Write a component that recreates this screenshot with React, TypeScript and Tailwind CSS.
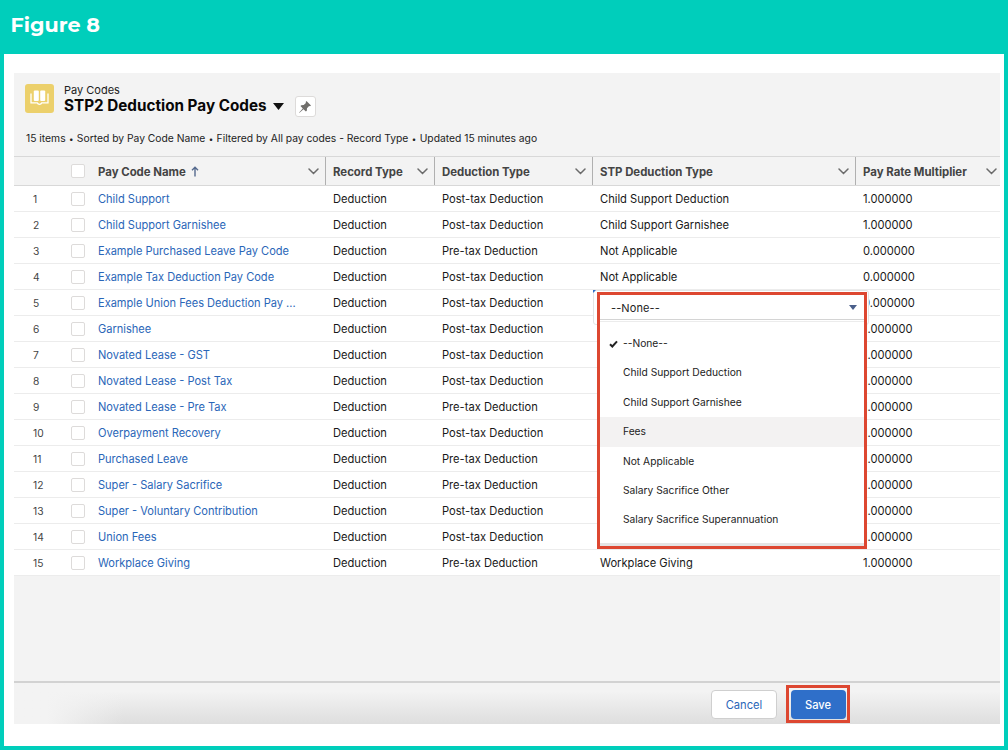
import * as React from 'react';

const ROWS = [
  ['Child Support', 'Post-tax', 'Child Support Deduction', '1.000000'],
  ['Child Support Garnishee', 'Post-tax', 'Child Support Garnishee', '1.000000'],
  ['Example Purchased Leave Pay Code', 'Pre-tax', 'Not Applicable', '0.000000'],
  ['Example Tax Deduction Pay Code', 'Post-tax', 'Not Applicable', '0.000000'],
  ['Example Union Fees Deduction Pay ...', 'Post-tax', '', '0.000000'],
  ['Garnishee', 'Post-tax', '', '1.000000'],
  ['Novated Lease - GST', 'Post-tax', '', '1.000000'],
  ['Novated Lease - Post Tax', 'Post-tax', '', '1.000000'],
  ['Novated Lease - Pre Tax', 'Pre-tax', '', '1.000000'],
  ['Overpayment Recovery', 'Post-tax', '', '1.000000'],
  ['Purchased Leave', 'Pre-tax', '', '1.000000'],
  ['Super - Salary Sacrifice', 'Pre-tax', '', '1.000000'],
  ['Super - Voluntary Contribution', 'Post-tax', '', '1.000000'],
  ['Union Fees', 'Post-tax', '', '1.000000'],
  ['Workplace Giving', 'Pre-tax', 'Workplace Giving', '1.000000'],
];

const OPTIONS = ['--None--', 'Child Support Deduction', 'Child Support Garnishee', 'Fees', 'Not Applicable', 'Salary Sacrifice Other', 'Salary Sacrifice Superannuation'];

const gridClass = 'grid grid-cols-[50px_27px_235px_109px_158px_263px_144px]';
const headClass = 'flex items-center justify-between border-[#b0b0b0] pl-[7px] whitespace-nowrap';
const cellClass = 'pl-[7px] pt-0.5';
const boxClass = 'h-3.5 w-3.5 rounded-[2px] border border-[#dddbda] bg-white';

function HeadCell({ label, sorted, last }: { label: string; sorted?: boolean; last?: boolean }) {
  return (
    <div className={`${headClass} ${last ? 'pr-[3px]' : 'border-r pr-1.5'}`}>
      <span className="flex items-center pt-[3px]">
        {label}
        {sorted && (
          <svg className="ml-[5px] h-[11px] w-2 -translate-y-px" viewBox="0 0 8 11" fill="none" stroke="#54698d" strokeWidth="1.4">
            <path d="M4 10.5V1.2M1 4.2l3-3 3 3" />
          </svg>
        )}
      </span>
      <svg className="mt-px h-[7px] w-[11px]" viewBox="0 0 11 7" fill="none" stroke="#6b6b6b" strokeWidth="1.5" strokeLinecap="round">
        <path d="M1 1l4.5 4.5L10 1" />
      </svg>
    </div>
  );
}

function Picklist() {
  return (
    <>
      {/* Inline edit cell behind the menu */}
      <div className="absolute left-[579px] top-[217px] h-[35px] w-[276px] rounded-[3px] border border-[#e4e4e4] bg-white">
        <svg className="absolute -left-px -top-px h-[3px] w-[3px]" viewBox="0 0 3 3"><path d="M0 0h3L0 3z" fill="#2f6fc9" /></svg>
      </div>
      <div className="absolute left-[583px] top-[219px] h-[257px] w-[270px] border-[3px] border-[#dd4731] bg-white text-[#222]">
        <div className="flex h-[25px] items-center justify-between border-b border-[#d4d4d4] pl-[11px] pr-[7px] pt-[3px] text-[11px] tracking-[0.1px]">
          <span>--None--</span>
          <svg className="mb-0.5 h-[5px] w-2" viewBox="0 0 8 5"><path d="M0 0h8L4 5z" fill="#4a5f8a" /></svg>
        </div>
        <div className="mt-px border-t border-[#ececec] pt-[7px] text-[10.25px]">
          {OPTIONS.map((o, i) => (
            <div key={o} className={`flex h-[29.4px] items-center pl-[9px] ${i === 3 ? 'bg-[#f3f2f2]' : ''}`}>
              <span className="flex w-3.5 items-center">
                {i === 0 && <svg className="h-2 w-[9px]" viewBox="0 0 9 8"><path d="M1 4.3l2.3 2.2L8 1.4" fill="none" stroke="#222" strokeWidth="2" /></svg>}
              </span>
              <span>{o}</span>
            </div>
          ))}
        </div>
        <div className="absolute inset-x-0 bottom-0 h-[3px] bg-[#e4e4e4]" />
      </div>
    </>
  );
}

function Dot() {
  return <span className="mx-[0.5px] text-[8px]">•</span>;
}

export default function App() {
  return (
    <div className="flex h-[750px] w-[1008px] flex-col overflow-hidden bg-[#00cebb] px-1 pb-1 font-[Inter,sans-serif]">
      <header className="flex h-[54px] shrink-0 items-center pb-[5px] pl-[6.5px]">
        <h1 className="font-[Montserrat,Inter,sans-serif] text-[20.7px] font-bold text-white">Figure 8</h1>
      </header>

      <main className="flex-1 bg-white pl-2.5 pr-1 pt-[19px]">
        <div className="relative flex h-[651px] flex-col bg-[#f3f3f3]">
          {/* List view header */}
          <div className="h-[83px] shrink-0 pl-3 pt-[11px]">
            <div className="-ml-px flex">
              <div className="flex h-[29px] w-[29px] items-center justify-center rounded-[3px] bg-[#ecd06b]">
                <svg className="mb-0.5 h-[17px] w-[19px]" viewBox="0 0 19 17" fill="#fff">
                  <rect x="3.8" y="1.5" width="5" height="10.5" rx="1" />
                  <rect x="10.2" y="1.5" width="5" height="10.5" rx="1" />
                  <path d="M1 4.5v9.3h6.2q.6 1.5 2.3 1.5t2.3-1.5H18V4.5" fill="none" stroke="#fff" strokeWidth="1.3" />
                </svg>
              </div>
              <div className="ml-2.5">
                <p className="text-[11px] leading-[13px] text-[#222]">Pay Codes</p>
                <div className="flex h-[17px] items-center">
                  <h2 className="whitespace-nowrap text-[15.25px] font-bold leading-4 text-[#080707]">STP2 Deduction Pay Codes</h2>
                  <svg className="ml-1.5 mt-0.5 h-[7px] w-[11px]" viewBox="0 0 11 7"><path d="M0 0h11L5.5 7z" fill="#111" /></svg>
                  <div className="ml-[11px] mt-0.5 flex h-[21px] w-[21px] items-center justify-center rounded-[3px] border border-[#dddbda] bg-white">
                    <svg className="h-3 w-3" viewBox="0 0 12 12" fill="#706e6b"><path d="M7.5 0L12 4.5l-1 .8-.9-.2L8 7.3l-.2 2.4-.9.8L4.5 8.2.8 11.6 0 12l.4-.8L3.8 7.5 1.5 5.1l.8-.9 2.4-.2L6.9 1.9 6.7 1z" /></svg>
                  </div>
                </div>
              </div>
            </div>
            <p className="mt-[17px] whitespace-nowrap text-[10.3px] leading-[14px] text-[#222]">
              15 items <Dot /> Sorted by Pay Code Name <Dot /> Filtered by All pay codes - Record Type <Dot /> Updated 15 minutes ago
            </p>
          </div>

          {/* Table */}
          <div className={`${gridClass} h-[30px] shrink-0 border-y border-[#d8d8d8] text-[11.4px] font-bold text-[#444]`}>
            <div />
            <div className="flex items-center pl-[7px]"><span className={boxClass} /></div>
            <HeadCell label="Pay Code Name" sorted />
            <HeadCell label="Record Type" />
            <HeadCell label="Deduction Type" />
            <HeadCell label="STP Deduction Type" />
            <HeadCell label="Pay Rate Multiplier" last />
          </div>
          <div className="bg-white">
            {ROWS.map(([name, type, stp, rate], i) => (
              <div key={name} className={`${gridClass} h-[26px] items-center whitespace-nowrap border-b border-[#ececec] text-[11.15px] text-[#181818]`}>
                <span className="pl-[19px] pt-[3px] text-[10.25px] text-[#444]">{i + 1}</span>
                <span className="pl-[7px] pt-px"><span className={`block ${boxClass}`} /></span>
                <span className={`${cellClass} text-[11.05px] text-[#2a66b8]`}>{name}</span>
                <span className={cellClass}>Deduction</span>
                <span className={cellClass}>{type} Deduction</span>
                <span className={cellClass}>{stp}</span>
                <span className={cellClass}>{rate}</span>
              </div>
            ))}
          </div>

          {/* Footer */}
          <div className="relative mt-auto flex h-[43px] shrink-0 items-center border-t-2 border-[#d2d2d2] bg-linear-to-b from-[#f3f3f3] from-20% to-[#dedede] pl-[697px] pt-px">
            <div className="absolute inset-y-0 left-0 w-[110px] bg-linear-to-r from-[#f3f3f3] from-30% to-[#f3f3f3]/0" />
            <button className="h-[29px] w-[66px] rounded-[4px] border border-[#cfcfcf] bg-white pt-0.5 text-[11.15px] text-[#2a66b8]">Cancel</button>
            <div className="ml-[9px] flex h-[38px] w-16 items-center justify-center border-[3px] border-[#dd4731]">
              <button className="h-[29px] w-[55px] shrink-0 rounded-[4px] bg-[#2f6fc9] pt-0.5 text-[11.15px] font-medium text-white">Save</button>
            </div>
          </div>

          <Picklist />
        </div>
      </main>
    </div>
  );
}
